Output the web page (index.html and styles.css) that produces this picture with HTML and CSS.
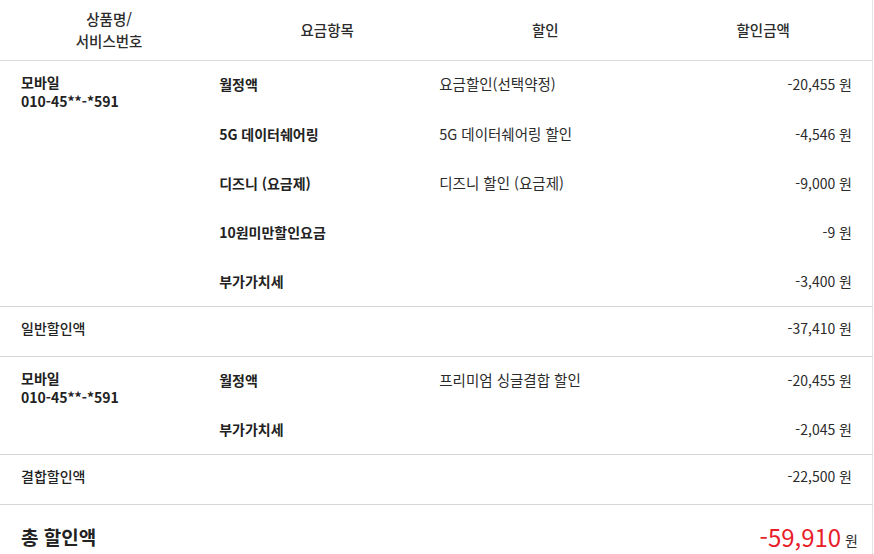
FILE: index.html
```html
<!DOCTYPE html>
<html lang="ko">
<head>
<meta charset="utf-8">
<link rel="stylesheet" href="styles.css">
</head>
<body>
<table class="discount">
  <colgroup>
    <col class="c1"><col class="c2"><col class="c3"><col class="c4">
  </colgroup>
  <thead>
    <tr>
      <th>상품명/<br>서비스번호</th>
      <th>요금항목</th>
      <th>할인</th>
      <th>할인금액</th>
    </tr>
  </thead>
  <tbody class="group">
    <tr>
      <td class="svc" rowspan="5"><span class="svc-name">모바일</span><br>010-45**-*591</td>
      <td class="item">월정액</td>
      <td class="disc">요금할인(선택약정)</td>
      <td class="amt">-20,455 원</td>
    </tr>
    <tr><td class="item">5G 데이터쉐어링</td><td class="disc">5G 데이터쉐어링 할인</td><td class="amt">-4,546 원</td></tr>
    <tr><td class="item">디즈니 (요금제)</td><td class="disc">디즈니 할인 (요금제)</td><td class="amt">-9,000 원</td></tr>
    <tr><td class="item">10원미만할인요금</td><td class="disc"></td><td class="amt">-9 원</td></tr>
    <tr><td class="item">부가가치세</td><td class="disc"></td><td class="amt">-3,400 원</td></tr>
  </tbody>
  <tbody class="sum">
    <tr><td class="label" colspan="3">일반할인액</td><td class="amt">-37,410 원</td></tr>
  </tbody>
  <tbody class="group">
    <tr>
      <td class="svc" rowspan="2"><span class="svc-name">모바일</span><br>010-45**-*591</td>
      <td class="item">월정액</td>
      <td class="disc">프리미엄 싱글결합 할인</td>
      <td class="amt">-20,455 원</td>
    </tr>
    <tr><td class="item">부가가치세</td><td class="disc"></td><td class="amt">-2,045 원</td></tr>
  </tbody>
  <tbody class="sum">
    <tr><td class="label" colspan="3">결합할인액</td><td class="amt">-22,500 원</td></tr>
  </tbody>
  <tbody class="total">
    <tr><td class="total-label" colspan="3">총 할인액</td><td class="total-amt"><span class="total-num">-59,910</span> 원</td></tr>
  </tbody>
</table>
</body>
</html>
```
FILE: styles.css
```css
html, body {
  margin: 0;
  padding: 0;
  background: #fff;
}
body {
  font-family: "Noto Sans CJK KR", "Noto Sans", sans-serif;
  font-size: 14px;
  color: #2b2b2b;
  width: 874px;
  overflow: hidden;
}
.discount {
  width: 873px;
  border-collapse: collapse;
  table-layout: fixed;
  border-right: 1px solid #e3e3e3;
}
.c1, .c2, .c3, .c4 { width: 218px; }
th {
  height: 60px;
  padding: 0;
  font-weight: 500;
  font-size: 14.5px;
  line-height: 22px;
  text-align: center;
  vertical-align: middle;
  border-bottom: 1px solid #dcdcdc;
  color: #2b2b2b;
}
tbody {
  border-top: 1px solid #d6d6d6;
}
td {
  padding: 0;
  vertical-align: top;
  line-height: 20px;
}
.group tr td.item,
.group tr td.disc,
.group tr td.amt {
  height: 49px;
  box-sizing: border-box;
  padding-top: 14px;
  padding-bottom: 15px;
}
.group tr:first-child td.item,
.group tr:first-child td.disc,
.group tr:first-child td.amt {
  padding-top: 13px;
}
.svc {
  padding: 12px 0 0 21px;
  font-weight: 700;
  line-height: 19px;
  color: #222;
}
.item {
  padding-left: 1px;
  font-weight: 700;
  color: #222;
}
.disc {
  padding-left: 3px;
  font-size: 14.5px;
}
.amt {
  text-align: right;
  padding-right: 20px;
}
.sum td {
  height: 49px;
  box-sizing: border-box;
  padding-top: 11px;
  padding-bottom: 18px;
  font-weight: 500;
}
.sum td.label {
  padding-left: 21px;
  color: #222;
}
.sum td.amt { font-weight: 400; }
.total td {
  height: 56px;
  box-sizing: border-box;
  vertical-align: top;
  padding-top: 19px;
  line-height: 26px;
}
.total-label {
  padding-left: 21px;
  font-size: 19px;
  font-weight: 700;
  color: #222;
}
.total-amt {
  text-align: right;
  padding-right: 14px;
  white-space: nowrap;
}
.total-num {
  font-size: 24px;
  color: #e8202a;
  vertical-align: -1px;
}
```
